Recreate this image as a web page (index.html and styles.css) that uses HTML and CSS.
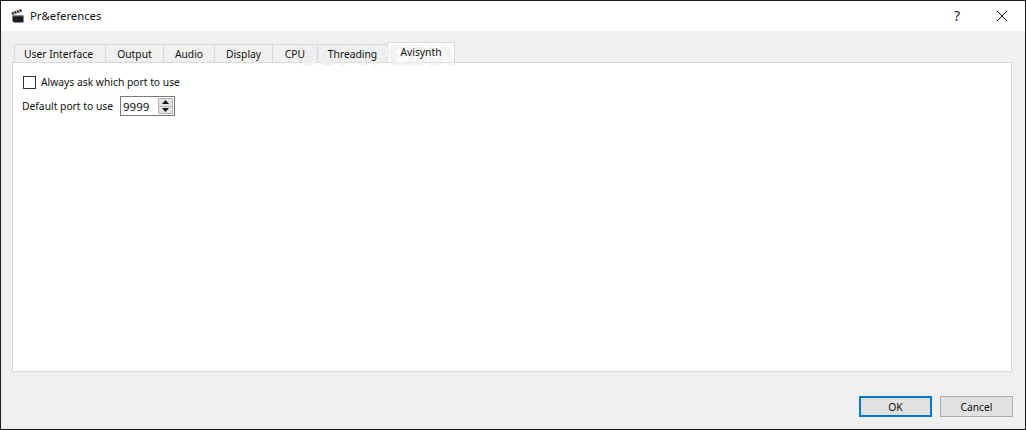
FILE: index.html
```html
<!DOCTYPE html>
<html lang="en">
<head>
<meta charset="utf-8">
<title>Preferences</title>
<link rel="stylesheet" href="styles.css">
</head>
<body>
<div class="window">
  <header class="titlebar">
    <svg class="app-icon" width="14" height="16" viewBox="0 0 14 16">
      <path d="M1.500 8h11v6.500H3L1.500 13z" fill="#1c1c1c"/>
      <path d="M0.500 4.500 10 1l1 2.500L1.500 7z" fill="#333"/>
      <path d="M2.500 3.700 4 6.100M5 2.800l1.500 2.400M7.500 1.900 9 4.300" stroke="#ccc" stroke-width="1"/>
      <path d="M1.500 7h11v1.300h-11z" fill="#888"/>
    </svg>
    <span class="title">Pr&amp;eferences</span>
    <span class="help">?</span>
    <svg class="close" width="10" height="10" viewBox="0 0 10 10"><path d="M0 0 10 10M10 0 0 10" stroke="#111" stroke-width="1" fill="none"/></svg>
  </header>
  <main class="content">
    <div class="tabs">
      <div class="tab t1"><span class="tab-label">User Interface</span></div>
      <div class="tab t2"><span class="tab-label">Output</span></div>
      <div class="tab t3"><span class="tab-label">Audio</span></div>
      <div class="tab t4"><span class="tab-label">Display</span></div>
      <div class="tab t5"><span class="tab-label">CPU</span></div>
      <div class="tab t6"><span class="tab-label">Threading</span></div>
      <div class="tab t7 active"><span class="tab-label">Avisynth</span></div>
    </div>
    <span class="watermark">SOFTPEDIA</span>
    <section class="pane">
      <label class="check-row"><span class="checkbox"></span>Always ask which port to use</label>
      <div class="port-row">
        <span>Default port to use</span>
        <div class="spin">
          <span class="spin-value">9999</span>
          <div class="spin-buttons">
            <span class="arrow-btn"><svg width="7" height="4" viewBox="0 0 7 4"><path d="M3.500 0 7 4H0z" fill="#111"/></svg></span>
            <span class="arrow-btn"><svg width="7" height="4" viewBox="0 0 7 4"><path d="M0 0h7L3.500 4z" fill="#111"/></svg></span>
          </div>
        </div>
      </div>
    </section>
    <footer class="actions">
      <button class="btn default">OK</button>
      <button class="btn">Cancel</button>
    </footer>
  </main>
</div>
</body>
</html>
```

FILE: styles.css
```css
html, body { margin: 0; padding: 0; }
body {
  width: 1026px;
  height: 430px;
  overflow: hidden;
  font-family: "Noto Sans", "Open Sans", sans-serif;
  font-size: 10.3px;
  color: #111;
}
.window {
  box-sizing: border-box;
  width: 1026px;
  height: 430px;
  border: 1px solid #1a1a1a;
  display: flex;
  flex-direction: column;
  background: #f0f0f0;
}
.titlebar {
  height: 30px;
  flex: none;
  background: #fff;
  display: flex;
  align-items: center;
  padding-left: 10px;
}
.app-icon { margin-right: 5px; }
.title { flex: 1; margin-top: -1px; font-size: 11.3px; }
.help { font-size: 14px; margin-right: 37px; color: #222; margin-top: -1px; }
.close { margin-right: 18px; }
.content {
  flex: 1;
  position: relative;
  display: flex;
  flex-direction: column;
  padding: 11px 13px 11px 11px;
}
.tabs {
  display: flex;
  align-items: flex-end;
  height: 21px;
  padding-left: 2px;
  margin-bottom: -1px;
}
.tab {
  box-sizing: border-box;
  height: 19px;
  line-height: 18px;
  text-align: center;
  border: 1px solid #d9d9d9;
  border-right: 0;
  background: #f0f0f0;
}
.tab-label { position: relative; z-index: 3; }
.t1 { width: 91px; padding-right: 3px; }
.t2 { width: 58px; }
.t3 { width: 51px; }
.t4 { width: 58px; }
.t5 { width: 45px; }
.t6 { width: 70px; }
.t7 { width: 68px; }
.tab.active {
  height: 21px;
  line-height: 19px;
  background: #fff;
  border-right: 1px solid #d9d9d9;
  border-bottom: 1px solid #fff;
}
.watermark {
  position: absolute;
  left: 298px;
  top: 9px;
  z-index: 2;
  font-family: "Liberation Sans", sans-serif;
  font-weight: 700;
  font-size: 28px;
  letter-spacing: -0.5px;
  color: rgba(255, 255, 255, 0.8);
  text-shadow: 0 0 1px rgba(160, 160, 160, 0.55);
  pointer-events: none;
}
.pane {
  box-sizing: border-box;
  height: 310px;
  flex: none;
  background: #fff;
  border: 1px solid #d9d9d9;
  padding: 12px 9px;
}
.check-row {
  display: flex;
  align-items: center;
  height: 14px;
}
.checkbox {
  box-sizing: border-box;
  width: 13px;
  height: 13px;
  border: 1px solid #333;
  background: #fff;
  margin: 0 5px 0 1px;
}
.port-row {
  display: flex;
  align-items: center;
  gap: 7px;
  margin-top: 7px;
}
.spin {
  box-sizing: border-box;
  width: 55px;
  height: 20px;
  border: 1px solid #7a7a7a;
  display: flex;
  align-items: center;
  justify-content: space-between;
  padding: 1px 1px 1px 2px;
}
.spin-value { font-size: 11.5px; }
.spin-buttons {
  box-sizing: border-box;
  width: 15px;
  height: 16px;
  background: #e4e4e4;
  border: 1px solid #b5b5b5;
  display: flex;
  flex-direction: column;
}
.arrow-btn {
  flex: 1;
  display: flex;
  align-items: center;
  justify-content: center;
}
.arrow-btn + .arrow-btn { border-top: 1px solid #b5b5b5; }
.actions {
  display: flex;
  justify-content: flex-end;
  gap: 8px;
  margin: 24px -1px 0 0;
}
.btn {
  box-sizing: border-box;
  width: 73px;
  height: 21px;
  padding: 0;
  font: inherit;
  color: #111;
  background: #e1e1e1;
  border: 1px solid #adadad;
}
.btn.default { border: 2px solid #0078d7; }
```
